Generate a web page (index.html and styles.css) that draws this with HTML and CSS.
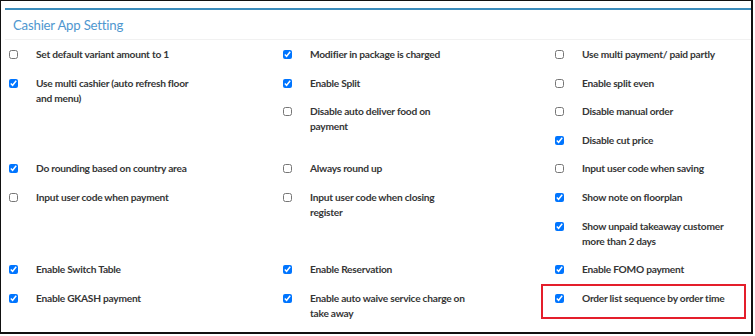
FILE: index.html
```html
<!DOCTYPE html>
<html lang="en">
<head>
<meta charset="UTF-8">
<meta name="viewport" content="width=device-width, initial-scale=1.0">
<title>Cashier App Setting</title>
<link rel="stylesheet" href="styles.css">
</head>
<body>
<div class="frame">
  <div class="box">
    <div class="box-header">
      <h3 class="box-title">Cashier App Setting</h3>
    </div>
    <div class="box-body">

      <div class="group">
        <div class="col">
          <label class="opt"><input type="checkbox"><span>Set default variant amount to 1</span></label>
          <label class="opt"><input type="checkbox" checked><span>Use multi cashier (auto refresh floor and menu)</span></label>
        </div>
        <div class="col">
          <label class="opt"><input type="checkbox" checked><span>Modifier in package is charged</span></label>
          <label class="opt"><input type="checkbox" checked><span>Enable Split</span></label>
          <label class="opt"><input type="checkbox"><span>Disable auto deliver food on payment</span></label>
        </div>
        <div class="col">
          <label class="opt"><input type="checkbox"><span>Use multi payment/ paid partly</span></label>
          <label class="opt"><input type="checkbox"><span>Enable split even</span></label>
          <label class="opt"><input type="checkbox"><span>Disable manual order</span></label>
          <label class="opt"><input type="checkbox" checked><span>Disable cut price</span></label>
        </div>
      </div>

      <div class="group">
        <div class="col">
          <label class="opt"><input type="checkbox" checked><span>Do rounding based on country area</span></label>
          <label class="opt"><input type="checkbox"><span>Input user code when payment</span></label>
        </div>
        <div class="col">
          <label class="opt"><input type="checkbox"><span>Always round up</span></label>
          <label class="opt"><input type="checkbox"><span>Input user code when closing register</span></label>
        </div>
        <div class="col">
          <label class="opt"><input type="checkbox"><span>Input user code when saving</span></label>
          <label class="opt"><input type="checkbox" checked><span>Show note on floorplan</span></label>
          <label class="opt"><input type="checkbox" checked><span>Show unpaid takeaway customer more than 2 days</span></label>
        </div>
      </div>

      <div class="group">
        <div class="col">
          <label class="opt"><input type="checkbox" checked><span>Enable Switch Table</span></label>
          <label class="opt"><input type="checkbox" checked><span>Enable GKASH payment</span></label>
        </div>
        <div class="col">
          <label class="opt"><input type="checkbox" checked><span>Enable Reservation</span></label>
          <label class="opt"><input type="checkbox" checked><span>Enable auto waive service charge on take away</span></label>
        </div>
        <div class="col">
          <label class="opt"><input type="checkbox" checked><span>Enable FOMO payment</span></label>
          <label class="opt marked"><input type="checkbox" checked><span>Order list sequence by order time</span><i class="mark"></i></label>
        </div>
      </div>

    </div>
  </div>
</div>
</body>
</html>
```

FILE: styles.css
```css
body { margin: 0; background: #fff; font-family: Lato, "Open Sans", sans-serif; }
.frame { width: 753px; height: 334px; box-sizing: border-box; border: solid #111; border-width: 1px 2px 2px 1px; padding: 7px 0 0 4px; overflow: hidden; }
.box { border-top: 2px solid #3c8dbc; background: #fff; }
.box-header { height: 29px; padding-left: 8px; border-bottom: 1px solid #f1f1f1; display: flex; align-items: center; }
.box-title { margin: 0; font-size: 13.2px; letter-spacing: -0.2px; font-weight: normal; color: #4f97cf; }
.box-body { padding: 7px 0 0 4px; }
.group { display: grid; grid-template-columns: 274px 272px 1fr; }
.opt { display: flex; align-items: flex-start; margin-bottom: 13.6px; font-size: 10.2px; letter-spacing: -0.25px; line-height: 15px; font-weight: bold; color: #363636; cursor: pointer; }
.opt input { width: 9px; height: 9px; margin: 3px 18px 0 0; flex: none; }
.opt span { width: 158px; }
.marked { position: relative; }
.mark { position: absolute; left: -14px; top: -7px; width: 205px; height: 35px; box-sizing: border-box; border: 2px solid #e41e2b; }
```
